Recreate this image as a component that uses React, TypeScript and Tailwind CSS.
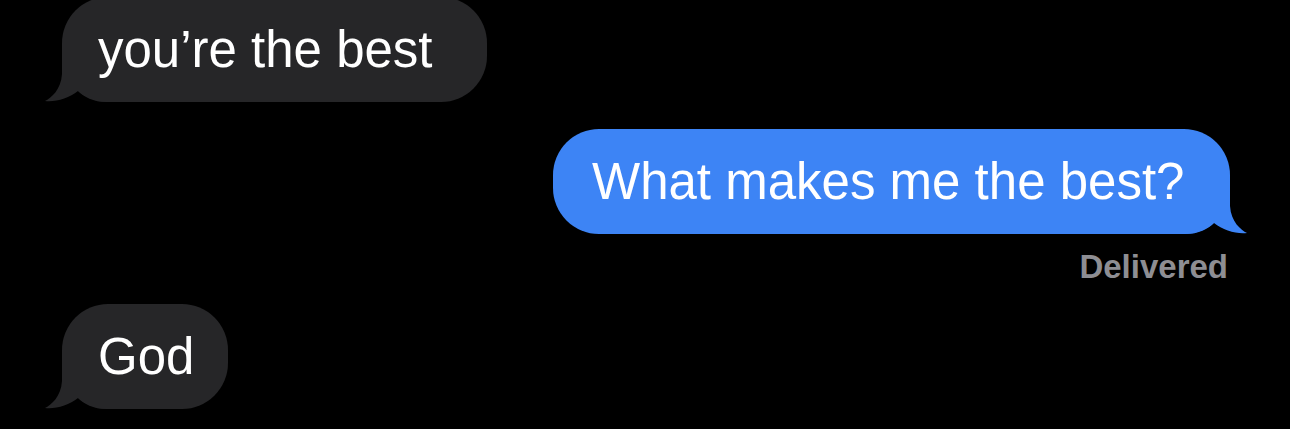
import React from "react";

const Tail = ({color, side}: {color: string; side: "left" | "right"}) => (
  <svg
    width="62"
    height="50"
    viewBox="0 0 62 50"
    className={`absolute bottom-0 ${side === "left" ? "left-[-17px]" : "right-[-17px] -scale-x-100"}`}
  >
    <path d="M17,0 L17,22 C16,38 6,46 0,49 C10,50.5 24,46 33,39 C39,45 48,50 62,50 L62,0 Z" fill={color} />
  </svg>
);

export default function App() {
  return (
    <main
      className="h-[429px] w-full bg-black overflow-hidden flex flex-col"
      style={{fontFamily: "'Liberation Sans', Arial, sans-serif"}}
    >
      {/* incoming */}
      <div className="pl-[62px] mt-[-3px]">
        <div className="relative w-[425px] h-[105px] rounded-[46px] bg-[#262628] pl-[36px] py-[22px] text-white text-[51px] leading-[61px]">
          <Tail color="#262628" side="left" />
          <span className="relative">you’re the best</span>
        </div>
      </div>

      {/* outgoing */}
      <div className="mt-[27px] flex justify-end pr-[60px]">
        <div className="relative w-[677px] h-[105px] rounded-[46px] bg-[#3d84f5] pl-[39px] py-[22px] text-white text-[51px] leading-[61px]">
          <Tail color="#3d84f5" side="right" />
          <span className="relative">What makes me the best?</span>
        </div>
      </div>

      <div className="mt-[13px] flex justify-end pr-[62px]">
        <span className="text-[33px] leading-[40px] font-semibold text-[#8e8e93]">Delivered</span>
      </div>

      <div className="pl-[62px] mt-[17px]">
        <div className="relative w-[166px] h-[105px] rounded-[46px] bg-[#262628] pl-[36px] py-[22px] text-white text-[51px] leading-[61px]">
          <Tail color="#262628" side="left" />
          <span className="relative">God</span>
        </div>
      </div>
    </main>
  );
}
